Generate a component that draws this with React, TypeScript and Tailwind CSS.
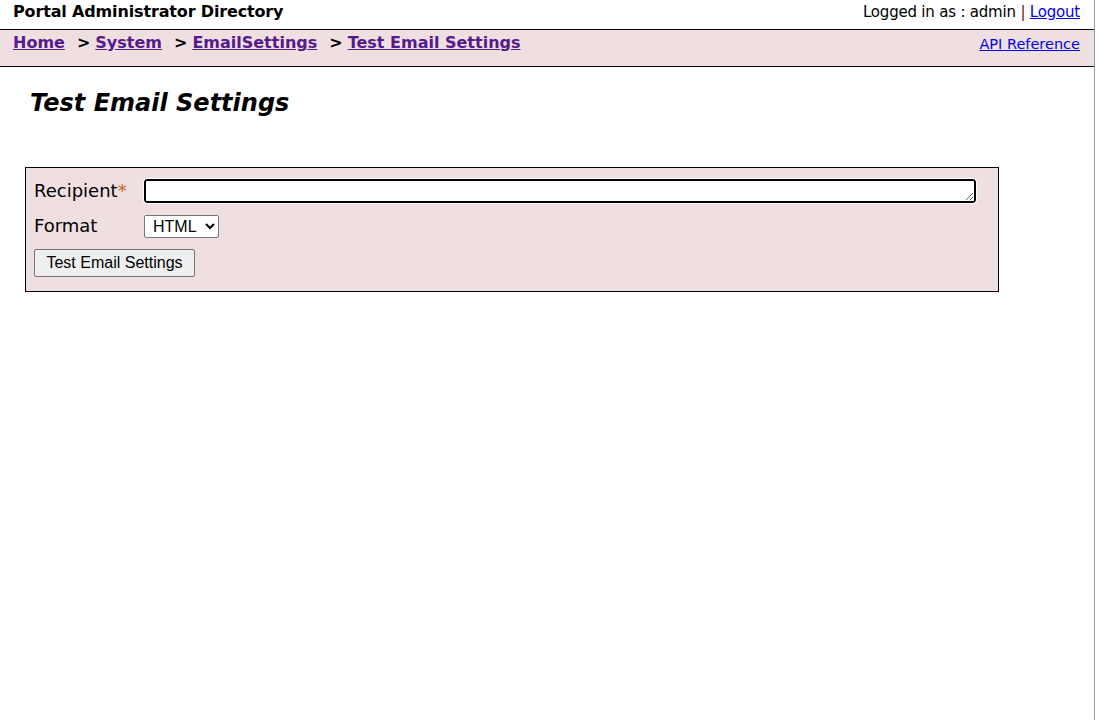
import React from "react";

export default function App() {
  const verdana = { fontFamily: '"DejaVu Sans", Verdana, sans-serif' };
  return (
    <div className="w-[1098px] h-[720px] bg-white flex overflow-hidden" style={verdana}>
      <div className="w-[1095px] h-full border-r border-[#a0a0a0] flex flex-col">
        <div className="h-[30px] flex items-start justify-between pl-[13px] pr-[14px] pt-[3px] border-b border-black">
          <div className="text-[16px] font-bold text-black leading-[18px] tracking-[-0.15px]">Portal Administrator Directory</div>
          <div className="text-[15px] text-black leading-[18px] tracking-[-0.2px]">
            Logged in as : admin <span className="text-[#5a1a1a]">|</span>{" "}
            <a href="#" className="text-[#0000ee] underline">Logout</a>
          </div>
        </div>
        <div className="h-[37px] bg-[#efdfe0] border-b border-black flex items-start justify-between pl-[13px] pr-[14px]">
          <div className="text-[16px] font-bold leading-[20px] pt-[3px] flex gap-0">
            <a href="#" className="text-[#551a8b] underline">Home</a>
            <span className="ml-[12px] mr-[5px] text-black">&gt;</span>
            <a href="#" className="text-[#551a8b] underline">System</a>
            <span className="ml-[12px] mr-[5px] text-black">&gt;</span>
            <a href="#" className="text-[#551a8b] underline">EmailSettings</a>
            <span className="ml-[12px] mr-[5px] text-black">&gt;</span>
            <a href="#" className="text-[#551a8b] underline">Test Email Settings</a>
          </div>
          <a href="#" className="text-[14.5px] text-[#0000ee] underline leading-[18px] pt-[5px]">API Reference</a>
        </div>
        <div className="pl-[30px] pt-[21px]">
          <h1 className="text-[24px] font-bold italic text-black leading-[30px]">Test Email Settings</h1>
        </div>
        <div className="ml-[25px] mt-[49px] w-[974px] h-[125px] border border-black bg-[#efdfe0] pl-[8px] pt-[11px] flex flex-col">
          <div className="flex items-center h-[24px]">
            <label className="w-[110px] text-[18px] text-black leading-[22px]">
              Recipient<span className="text-[#c0651f]">*</span>
            </label>
            <textarea
              rows={1}
              className="w-[832px] h-[24px] bg-white border-2 border-black rounded-[3px] outline outline-1 outline-white text-[14px] px-1"
              style={{ resize: "vertical" }}
            />
          </div>
          <div className="flex items-center h-[24px] mt-[11px]">
            <label className="w-[110px] text-[18px] text-black leading-[22px]">Format</label>
            <select
              className="h-[23px] w-[75px] bg-white border border-[#767676] rounded-[2px] text-[16px] text-black pl-[4px] pr-[2px]"
              style={{ fontFamily: '"Liberation Sans", Arial, sans-serif', appearance: "auto" }}
              defaultValue="HTML"
            >
              <option>HTML</option>
              <option>Text</option>
            </select>
          </div>
          <div className="mt-[11px]">
            <button
              className="h-[28px] w-[161px] bg-[#efefef] border border-[#767676] rounded-[2px] text-[16px] text-black leading-[18px]"
              style={{ fontFamily: '"Liberation Sans", Arial, sans-serif' }}
            >
              Test Email Settings
            </button>
          </div>
        </div>
      </div>
    </div>
  );
}
